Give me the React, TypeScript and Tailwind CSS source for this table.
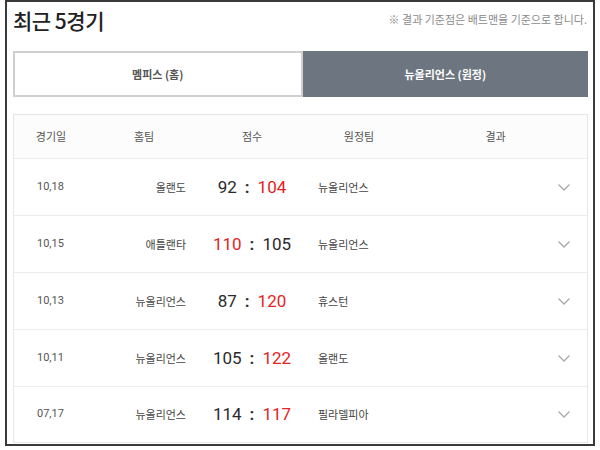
import React from "react";

const games = [
  { date: "10.18", home: "올랜도", hs: 92, as: 104, away: "뉴올리언스", homeWin: false },
  { date: "10.15", home: "애틀랜타", hs: 110, as: 105, away: "뉴올리언스", homeWin: true },
  { date: "10.13", home: "뉴올리언스", hs: 87, as: 120, away: "휴스턴", homeWin: false },
  { date: "10.11", home: "뉴올리언스", hs: 105, as: 122, away: "올랜도", homeWin: false },
  { date: "07.17", home: "뉴올리언스", hs: 114, as: 117, away: "필라델피아", homeWin: false },
];

const kr = { fontFamily: '"Noto Sans CJK KR", "Noto Sans", sans-serif' };
const num = { fontFamily: 'Roboto, "Liberation Sans", sans-serif' };

function Chevron() {
  return (
    <svg width="14" height="9" viewBox="0 0 14 9" fill="none">
      <path d="M1.5 1.5 L7 7 L12.5 1.5" stroke="#a8a8a8" strokeWidth="1.3" />
    </svg>
  );
}

export default function App() {
  return (
    <div className="w-[600px] h-[450px] bg-white" style={kr}>
      <div className="ml-[5px] w-[590px] h-[446px] border-2 border-[#3a3a3a] pl-[6px] pr-[5px] pt-[2px]">
        <div className="flex items-center justify-between h-[32px]">
          <div className="text-[21px] font-medium text-[#222] leading-none tracking-[-0.5px]">최근 5경기</div>
          <div className="text-[11px] text-[#8a8a8a] pr-[1px] pb-[2px]">※ 결과 기준점은 배트맨을 기준으로 합니다.</div>
        </div>
        <div className="mt-[15px] flex h-[46px] w-[575px]">
          <div className="flex-1 flex items-center justify-center border-2 border-[#cfcfcf] text-[11px] font-bold text-[#555]">
            멤피스 (홈)
          </div>
          <div className="flex-1 flex items-center justify-center bg-[#6d7580] text-[11px] font-bold text-white">
            뉴올리언스 (원정)
          </div>
        </div>
        <div className="mt-[17px] w-[575px] border border-[#e6e6e6]">
          <div className="grid grid-cols-[74px_112px_104px_110px_1fr] h-[44px] items-center text-[11px] text-[#555] bg-[#fcfcfc] border-b border-[#ececec]">
            <div className="text-center">경기일</div>
            <div className="text-center">홈팀</div>
            <div className="text-center">점수</div>
            <div className="text-center">원정팀</div>
            <div className="text-center pr-[10px]">결과</div>
          </div>
          {games.map((g, i) => (
            <div
              key={i}
              className={`grid grid-cols-[74px_112px_104px_110px_1fr] items-center text-[11px] text-[#444] ${i < games.length - 1 ? "h-[57px] border-b border-[#ececec]" : "h-[55px]"}`}
            >
              <div className="pl-[23px] text-[#555]" style={num}>{g.date.replace(".", ",")}</div>
              <div className="text-right pr-[14px]">{g.home}</div>
              <div className="flex items-center justify-center text-[17px] leading-none font-normal" style={num}>
                <span className={g.homeWin ? "text-[#e42323]" : "text-[#2a2a2a]"}>{g.hs}</span>
                <span className="mx-[8px] text-[#333] font-bold">:</span>
                <span className={g.homeWin ? "text-[#2a2a2a]" : "text-[#e42323]"}>{g.as}</span>
              </div>
              <div className="pl-[14px]">{g.away}</div>
              <div className="flex justify-end pr-[16px]">
                <Chevron />
              </div>
            </div>
          ))}
        </div>
      </div>
    </div>
  );
}
